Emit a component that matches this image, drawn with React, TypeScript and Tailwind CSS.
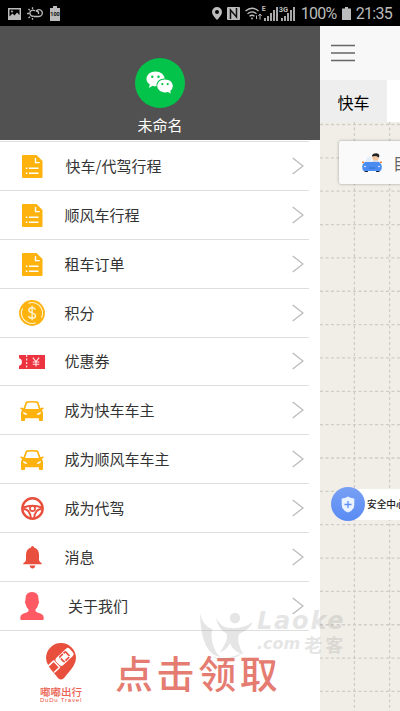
import type { ReactNode } from "react";

const DocIcon = () => (
  <svg width="21" height="23" viewBox="0 0 21 23" fill="none">
    <path d="M1 0h13.5l6 6v16a1 1 0 0 1-1 1H1a1 1 0 0 1-1-1V1a1 1 0 0 1 1-1z" fill="#fdb20d" />
    <path d="M13.5 3v4.6h4.2" stroke="#fff" strokeWidth="1.4" />
    <path d="M7 13.2h9.5M7 18.3h9.5M3.8 13.2h1.6M3.8 18.3h1.6" stroke="#fff" strokeWidth="1.5" />
  </svg>
);

const CoinIcon = () => (
  <svg width="26" height="26" viewBox="0 0 26 26" fill="none">
    <circle cx="13" cy="13" r="12.9" fill="#fdb20d" />
    <path d="M9.2 3.2a10.6 10.6 0 0 1 13.2 5M3.6 8.2a10.6 10.6 0 0 0 0 9.6M16.8 22.8a10.6 10.6 0 0 1-13.2-5M22.4 8.2a10.6 10.6 0 0 1 0 9.6" stroke="#fff3cf" strokeWidth="1.1" />
    <path d="M16.3 9.7c-.4-1.2-1.6-1.9-3.2-1.9-1.9 0-3.2.9-3.2 2.5 0 3.4 6.6 1.9 6.6 5.4 0 1.6-1.4 2.5-3.4 2.5-1.9 0-3.3-.8-3.6-2.3M13.1 5.8v14.4" stroke="#fff3cf" strokeWidth="1.4" />
  </svg>
);

const CouponIcon = () => (
  <svg width="26" height="14" viewBox="0 0 26 14" fill="none">
    <path d="M0 0h26v14H0v-3.3a3.8 3.8 0 0 0 0-7.4z" fill="#ec3440" />
    <path d="M7.7 0v14" stroke="#fff" strokeWidth="1" strokeDasharray="2 1.5" />
    <path d="M13.8 2.7l3.2 3.9 3.2-3.9M17 6.6V11.5M13.7 7h6.600M13.7 9.2h6.600" stroke="#ffe2e2" strokeWidth="1.1" />
  </svg>
);

const CarIcon = () => (
  <svg width="24" height="20" viewBox="0 0 24 20">
    <path
      fillRule="evenodd"
      d="M5.6 1.2Q6.1.1 12 .1t6.4 1.1l2.1 6.1 2-.8q1-.2 1.2.8.1.7-.7 1l-1.3.6q1.3 1.4 1.3 3.1v7.1q0 .8-.8.8h-2.5q-.8 0-.8-.8v-1.9H5.1v1.9q0 .8-.8.8H1.8q-.8 0-.8-.8V12q0-1.7 1.3-3.1L1 8.3q-.8-.3-.7-1 .2-1 1.2-.8l2 .8zM7 2.3L5.1 8.1h13.8L17 2.3Q16.5 1.6 12 1.6T7 2.3zM2.8 11.2q.4 2.5 4.5 2.6-.8-2.3-4.5-2.6zM21.2 11.2q-3.7.3-4.5 2.6 4.1-.1 4.5-2.6z"
      fill="#fdb20d"
    />
  </svg>
);

const WheelIcon = () => (
  <svg width="23" height="23" viewBox="0 0 23 23" fill="none" stroke="#e94f3d">
    <circle cx="11.5" cy="11.5" r="10.2" strokeWidth="2.4" />
    <path d="M2 10.5q9.500-3.500 19 0M2.300 12q6.500 0 7.600 9M20.700 12q-6.500 0-7.600 9" strokeWidth="1.9" />
    <circle cx="11.5" cy="11.5" r="2.6" fill="#fff" strokeWidth="1.7" />
  </svg>
);

const BellIcon = () => (
  <svg width="19" height="23" viewBox="0 0 19 23" fill="#e94f3d">
    <path d="M8 1.5a1.5 1.5 0 0 1 3 0Q15.8 3 16 8.5V14q.2 1.7 2.7 3.2v1H.3v-1Q2.8 15.7 3 14V8.5Q3.2 3 8 1.5zM6.5 19.6h6q-.7 2.9-3 2.9t-3-2.900z" />
  </svg>
);

const PersonIcon = () => (
  <svg width="24" height="28" viewBox="0 0 24 28" fill="#ff5964">
    <path d="M12 0q6.5.1 6.5 7 0 .8 0 1.5 1.3.6-.1 3.4-.7 3.700-2.900 5.600v1.700q.8 1.200 5.500 2.500 2.700 1 2.700 3.800V27q0 1-1 1H1.300q-1 0-1-1v-1.500q0-2.800 2.700-3.800 4.700-1.300 5.500-2.500v-1.700q-2.200-1.900-2.900-5.600-1.400-2.800-.1-3.400V7Q5.500.1 12 0z" />
  </svg>
);

type MenuItem = { label: string; icon: ReactNode; pad?: string };

const menu: MenuItem[] = [
  { label: "快车/代驾行程", icon: <DocIcon />, pad: "pl-[1.5px]" },
  { label: "顺风车行程", icon: <DocIcon /> },
  { label: "租车订单", icon: <DocIcon /> },
  { label: "积分", icon: <CoinIcon /> },
  { label: "优惠券", icon: <CouponIcon /> },
  { label: "成为快车车主", icon: <CarIcon /> },
  { label: "成为顺风车车主", icon: <CarIcon /> },
  { label: "成为代驾", icon: <WheelIcon /> },
  { label: "消息", icon: <BellIcon /> },
  { label: "关于我们", icon: <PersonIcon />, pad: "pl-[4px]" },
];

const Signal = () => (
  <svg width="14" height="14" viewBox="0 0 14 14" fill="#a8a8a8">
    <path d="M0 11h2v3H0zM3 9h2v5H3zM6 6h2v8H6zM9 3h2v11H9zM12 0h2v14h-2z" />
  </svg>
);

const StatusBar = () => (
  <div className="flex h-[26px] shrink-0 items-center justify-between bg-black pt-px pr-2 pl-2 text-[#bcbcbc]">
    <div className="flex items-center gap-[6px]">
      <svg width="13" height="12" viewBox="0 0 13 12" fill="none">
        <path fillRule="evenodd" d="M0 0h13v12H0zM1.500 1.500v7l3-3 2 2 2.500-3 2.500 2.500V1.500z" fill="#bcbcbc" />
        <circle cx="4" cy="3.5" r="1" fill="#bcbcbc" />
      </svg>
      <svg width="16" height="13" viewBox="0 0 16 13" fill="none" stroke="#bcbcbc" strokeWidth="1.3">
        <path d="M7 9.500h5a3.400 3.400 0 1 0-3-5.200M8 4a3 3 0 1 0-1 5M9 4q3 0 2.500 3M.1 6.500h2M1.500 2l1.300 1.300M5.500.2v1.700M1.500 11l1.500-1.300M5.500 11v1.800" />
      </svg>
      <svg className="ml-px" width="10" height="15" viewBox="0 0 10 15">
        <path d="M3 0h4v2h3v13H0V2h3z" fill="#bcbcbc" />
        <text x="5" y="10" textAnchor="middle" fontFamily="Roboto, sans-serif" fontSize="5.5" fontWeight="700" fill="#111">100</text>
      </svg>
    </div>
    <div className="flex items-center font-[Roboto,sans-serif] text-[16px] leading-none">
      <svg width="10" height="13" viewBox="0 0 10 13">
        <path fillRule="evenodd" d="M5 0a5 5 0 0 1 5 5q0 3-5 8Q0 8 0 5a5 5 0 0 1 5-5zm0 3a2 2 0 1 0 0 4 2 2 0 0 0 0-4z" fill="#bcbcbc" />
      </svg>
      <svg className="ml-[5px]" width="13" height="13" viewBox="0 0 13 13" fill="none">
        <rect width="13" height="13" rx="1" fill="#bcbcbc" />
        <path d="M3.500 12V3l6 7V1" stroke="#111" strokeWidth="1.5" />
      </svg>
      <svg className="ml-[5px]" width="18" height="13" viewBox="0 0 18 13" fill="none" stroke="#bcbcbc" strokeWidth="1.4">
        <path d="M.5 4Q7 -1.500 13.500 4M2.500 6.700q4.500-3.600 9 0M4.500 9.200Q7 7.200 9.500 9.200" />
        <circle cx="7" cy="11.500" r=".9" fill="#bcbcbc" stroke="none" />
        <path d="M15 12.500V7m-1.600 1.800L15 7l1.600 1.800M11.500 8.500v3.500" strokeWidth="1" />
      </svg>
      <div className="relative ml-px">
        <Signal />
        <span className="absolute -top-px -left-[2px] text-[7px] leading-none font-bold">E</span>
      </div>
      <div className="relative ml-[3px]">
        <Signal />
        <span className="absolute -top-px -left-[2px] bg-black text-[7.5px] leading-none font-bold">3G</span>
      </div>
      <span className="ml-[6px] pt-px tracking-[-0.7px]">100%</span>
      <svg className="ml-[5px]" width="9" height="13" viewBox="0 0 9 13" fill="#bcbcbc">
        <path d="M3 0h3v1.500h3V13H0V1.500h3z" />
      </svg>
      <span className="ml-[5px] pt-px tracking-[-0.7px]">21:35</span>
    </div>
  </div>
);

const DuduLogo = () => (
  <div className="flex w-[44px] flex-col items-center text-[#e94f3d]">
    <svg width="30" height="37" viewBox="0 0 30 37" fill="none">
      <path d="M15 0a15 15 0 0 1 15 15q0 7-10 17.500-5 8-10 0Q0 22 0 15A15 15 0 0 1 15 0z" fill="#e94f3d" />
      <g transform="rotate(47 16 16)">
        <rect x="11.2" y="3.5" width="10" height="18.5" rx="2.5" fill="#fff" />
        <rect x="12.9" y="8.5" width="6.6" height="8" rx="1" stroke="#e94f3d" strokeWidth="1.7" strokeDasharray="5 1" />
        <path d="M11.200 23.500h9.800M11.800 24v7M20.500 24v7" stroke="#fff" strokeWidth="1.5" />
      </g>
    </svg>
    <span className="mt-[6px] text-[10.5px] leading-[11px] font-medium whitespace-nowrap opacity-90">嘟嘟出行</span>
    <span className="font-[Liberation_Sans,sans-serif] text-[6px] leading-[6px] tracking-[0.8px] whitespace-nowrap">DuDu Travel</span>
  </div>
);

const Drawer = () => (
  <aside className="flex w-[320px] shrink-0 flex-col bg-white">
    <div className="flex h-[114px] shrink-0 flex-col items-center bg-[#515151] pt-8">
      <div className="flex size-[50px] items-center justify-center rounded-full bg-[#04c34b]">
        <svg width="28" height="24" viewBox="0 0 28 24" fill="#fff">
          <path fillRule="evenodd" d="M9.500.5c5 0 8.700 3 9.200 7-5 0-8.500 3-8.200 7.800q-2.200.2-4-.5L3 17l.8-3.500Q.5 11.300.5 8C.5 3.500 4.500.5 9.500.5zM6.300 4.500a1.200 1.200 0 1 0 0 2.400 1.200 1.200 0 0 0 0-2.400zm6.200 0a1.200 1.200 0 1 0 0 2.400 1.200 1.200 0 0 0 0-2.400z" />
          <path fillRule="evenodd" d="M19 8.600c4.500 0 7.800 2.800 7.800 6.500q0 3-2.600 4.900l.6 2.500-2.800-1.500c-5.500 1.600-10.700-1.400-10.700-5.900 0-3.700 3.200-6.500 7.700-6.500zM16.300 12a1.100 1.100 0 1 0 0 2.200 1.100 1.100 0 0 0 0-2.200zm5.400 0a1.100 1.100 0 1 0 0 2.200 1.100 1.100 0 0 0 0-2.200z" />
        </svg>
      </div>
      <span className="mt-[6px] text-[15px] leading-[22px] text-white">未命名</span>
    </div>

    <ul className="mt-px mr-[11px] border-t border-[#dedede]">
      {menu.map((item) => (
        <li key={item.label} className="flex h-[48.88px] items-center border-b border-[#dedede]">
          <div className="flex w-[64px] shrink-0 items-center justify-center pt-px">{item.icon}</div>
          <span className={`flex-1 text-[15px] leading-5 text-[#333] ${item.pad ?? "pl-[0.5px]"}`}>{item.label}</span>
          <svg className="mr-[5px]" width="12" height="18" viewBox="0 0 12 18" fill="none">
            <path d="M.7 1l10.300 8-10.300 8" stroke="#bcbcbc" strokeWidth="1.4" />
          </svg>
        </li>
      ))}
    </ul>

    <div className="flex flex-1 items-start pt-3 pl-[39px]">
      <DuduLogo />
      <span className="ml-[32px] text-[38px] leading-[58px] font-medium tracking-[3.6px] whitespace-nowrap text-[#e57c71]">
        点击领取
      </span>
    </div>
  </aside>
);

const MapPane = () => (
  <main className="flex min-w-0 flex-1 flex-col overflow-hidden bg-[#f1eee8]">
    <div className="flex h-[54px] shrink-0 items-center bg-[#f8f8f8] pl-[11px]">
      <svg width="24" height="18" viewBox="0 0 24 18" stroke="#666" strokeWidth="1.4">
        <path d="M0 1.500h24M0 9h24M0 16.500h24" />
      </svg>
    </div>
    <div className="flex h-[42px] shrink-0 bg-white">
      <div className="flex w-[67px] items-center justify-center bg-[#eee] pt-[2px] text-[16px] text-black">快车</div>
    </div>
    <div className="relative flex-1 overflow-hidden">
      <svg className="absolute inset-0" width="80" height="589" stroke="#d0cdc8" strokeWidth="1.3" strokeDasharray="3 2.5">
        {Array.from({ length: 18 }, (_, i) => (
          <line key={i} x1="0" x2="80" y1={2.5 + i * 33.35} y2={2.5 + i * 33.35} />
        ))}
        <line x1="34.4" x2="34.4" y1="0" y2="589" />
        <line x1="69.6" x2="69.6" y1="0" y2="589" />
      </svg>

      <div className="absolute top-[19px] left-[19px] flex h-[43px] w-[90px] items-center rounded-[2px] bg-[#fafafa] pl-[23px] shadow-[0_0_3px_rgba(0,0,0,0.35)]">
        <svg className="shrink-0" width="20" height="20" viewBox="0 0 20 20">
          <path d="M3 10l2-5q1-1 4-1v6z" fill="#e1edf8" />
          <circle cx="13.5" cy="4.5" r="3.2" fill="#f3c6a2" />
          <path d="M9.800 3.500q.5-3.400 4.700-3.300Q18.300.5 17 4.500L14 3z" fill="#252525" />
          <path d="M9.500 10q.5-3 4-3t3.500 3z" fill="#d8d8de" />
          <path d="M2.500 16.500h3.500V19H2.500zM14 16.500h3.500V19H14z" fill="#242b3c" />
          <path d="M3 9h14q2.800 1.500 2.800 4.500 0 4-1.800 4.500H2Q.2 17.500.2 13.500q0-3 2.800-4.500z" fill="#4a8cef" />
          <circle cx="3" cy="13.5" r=".8" fill="#fff" />
          <circle cx="17" cy="13.5" r=".8" fill="#fff" />
          <path d="M7 14.500h6v1H7z" fill="#2f6fd0" />
          <path d="M0 8.500h2v1.500H0zM18 8.500h2v1.500h-2z" fill="#ef8b32" />
        </svg>
        <span className="ml-[11px] text-[16px] leading-5 whitespace-nowrap text-[#666]">目的地</span>
      </div>

      <div className="absolute top-[365px] left-[11px] flex h-[34px] w-[100px] items-center">
        <div className="relative z-10 flex size-[34px] shrink-0 items-center justify-center rounded-full bg-linear-to-b from-[#78a0f4] to-[#598bf4]">
          <svg width="14" height="17" viewBox="0 0 14 17">
            <path d="M7 .5q3 2 6.300 2V9q0 5-6.300 7.500Q.7 14 .7 9V2.500Q4 2.500 7 .5z" fill="#eaf3ff" />
            <path d="M7 5v7M3.500 8.500h7" stroke="#5c8ff4" strokeWidth="1.3" />
          </svg>
        </div>
        <div className="-ml-4 flex h-[31px] items-center bg-white pt-px pl-[18px] text-[9.7px] font-medium whitespace-nowrap text-[#222]">安全中心</div>
      </div>
    </div>
  </main>
);

const Watermark = () => (
  <div className="pointer-events-none absolute top-[609px] left-[199px] flex font-['DejaVu_Sans',sans-serif] text-[#999] opacity-25">
    <svg width="55" height="52" viewBox="0 0 55 52" fill="currentColor">
      <circle cx="36" cy="9" r="5.2" />
      <path d="M1 4Q3 16 13 20q-2 12 4 23 2 4 5 5Q2 46 1 4z" />
      <path d="M17 9q5 10 15 10 12 1 22-6-3 7-14 12-3 7 4 20-10-2-13-11-3 7-10 9 8-11 7-18-9-5-11-16z" />
      <path d="M13 48q18 4 33-6-9 8-17 8-9 1-16-2z" />
    </svg>
    <div className="ml-[3px] flex flex-col">
      <span className="text-[24px] leading-[25px] font-bold tracking-[1.8px] italic">Laoke</span>
      <span className="flex items-center text-[16px] leading-[20px] font-bold italic">
        .com
        <span className="ml-[4px] font-['Noto_Sans_CJK_SC',sans-serif] text-[18px] tracking-[3px] not-italic">老客</span>
      </span>
    </div>
  </div>
);

const App = () => {
  return (
    <div className="relative flex h-[711px] w-[400px] flex-col overflow-hidden bg-white font-['Noto_Sans_CJK_SC',sans-serif]">
      <StatusBar />
      <div className="flex min-h-0 flex-1">
        <Drawer />
        <MapPane />
      </div>
      <Watermark />
    </div>
  );
};

export default App;
